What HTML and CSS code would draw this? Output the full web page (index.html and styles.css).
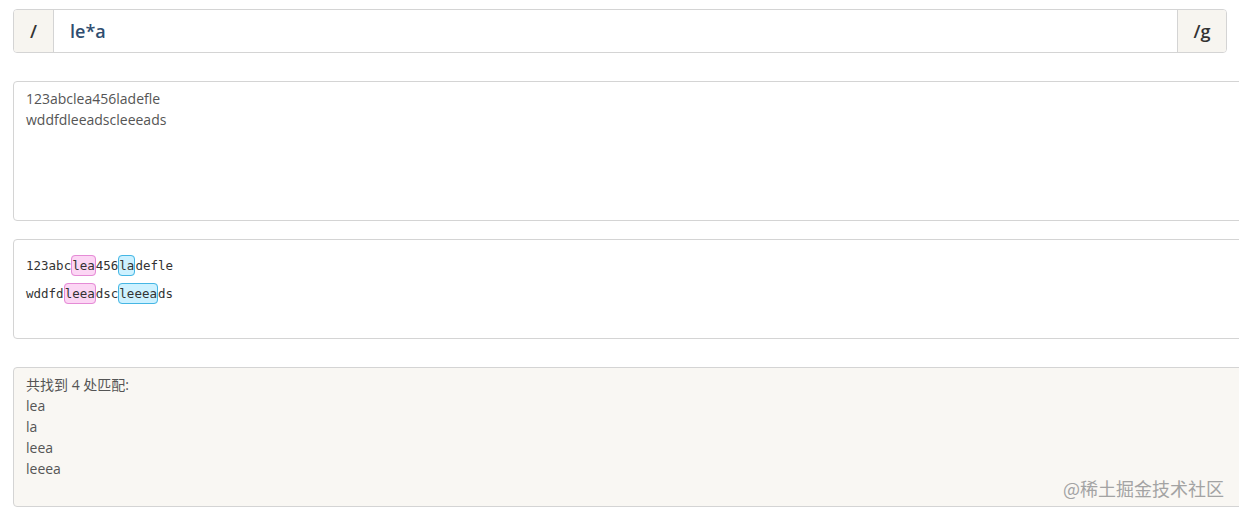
FILE: index.html
```html
<!DOCTYPE html>
<html>
<head>
<meta charset="utf-8">
<link rel="stylesheet" href="styles.css">
</head>
<body>
<div class="page">
  <div class="input-group">
    <span class="addon addon-left">/</span>
    <div class="regex">le*a</div>
    <span class="addon addon-right">/g</span>
  </div>
  <div class="box source">123abclea456ladefle<br>wddfdleeadscleeeads</div>
  <div class="box result">
    <div class="line">123abc<span class="hl pink">lea</span>456<span class="hl blue">la</span>defle</div>
    <div class="line">wddfd<span class="hl pink">leea</span>dsc<span class="hl blue">leeea</span>ds</div>
  </div>
  <div class="box matches">
    <div>共找到 4 处匹配:</div>
    <div>lea</div>
    <div>la</div>
    <div>leea</div>
    <div>leeea</div>
    <span class="watermark">@稀土掘金技术社区</span>
  </div>
</div>
</body>
</html>
```
FILE: styles.css
```css
html, body {
  margin: 0;
  padding: 0;
  overflow: hidden;
  background: #fff;
}
.page {
  padding: 9px 0 0 13px;
  width: 1260px;
  font-family: "Open Sans", "Noto Sans CJK SC", sans-serif;
  color: #555;
  font-size: 14px;
}
.input-group {
  display: flex;
  width: 1212px;
  height: 42px;
  border: 1px solid #d4d4d4;
  border-radius: 4px;
  overflow: hidden;
}
.addon {
  background: #f7f5f0;
  color: #333;
  font-size: 18px;
  font-weight: 600;
  display: flex;
  align-items: center;
  justify-content: center;
}
.addon-left {
  width: 39px;
  border-right: 1px solid #d4d4d4;
}
.addon-right {
  width: 48px;
  border-left: 1px solid #d4d4d4;
}
.regex {
  flex: 1;
  display: flex;
  align-items: center;
  padding-left: 16px;
  font-size: 18px;
  font-weight: 600;
  color: #2f4d70;
}
.box {
  border: 1px solid #d4d4d4;
  border-radius: 4px;
  box-sizing: border-box;
  position: relative;
}
.source {
  margin-top: 28px;
  height: 140px;
  padding: 6px 12px;
  line-height: 21px;
}
.result {
  margin-top: 18px;
  height: 100px;
  padding: 15px 12px 0;
  font-family: "DejaVu Sans Mono", monospace;
  font-size: 12.5px;
  color: #333;
}
.line {
  height: 28px;
  line-height: 22px;
}
.hl {
  border-radius: 4px;
  border: 1px solid;
  padding: 2px 0;
}
.pink {
  background: #fcd6f4;
  border-color: #e58bd6;
}
.blue {
  background: #cdf1ff;
  border-color: #45b6e4;
}
.matches {
  margin-top: 28px;
  height: 140px;
  padding: 6px 12px;
  line-height: 21px;
  background: #f9f7f3;
}
.watermark {
  position: absolute;
  left: 1049px;
  top: 108px;
  font-size: 18px;
  line-height: 24px;
  color: #a3a3a3;
  font-family: "Noto Sans CJK SC", sans-serif;
}
```
